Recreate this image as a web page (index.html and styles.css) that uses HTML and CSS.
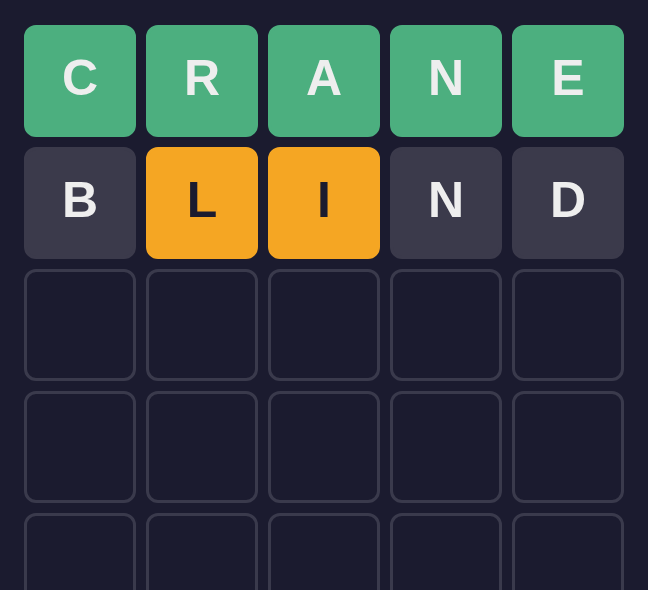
FILE: index.html
```html
<!DOCTYPE html>
<html lang="en">

<head>
    <title>Wordle</title>
    <meta name="viewport" content="width=device-width, initial-scale=1">
    <link rel="stylesheet" href="styles.css">
</head>

<body>
    <div class="board">
        <div class="tile correct">C</div>
        <div class="tile correct">R</div>
        <div class="tile correct">A</div>
        <div class="tile correct">N</div>
        <div class="tile correct">E</div>

        <div class="tile absent">B</div>
        <div class="tile present">L</div>
        <div class="tile present">I</div>
        <div class="tile absent">N</div>
        <div class="tile absent">D</div>

        <div class="tile"></div>
        <div class="tile"></div>
        <div class="tile"></div>
        <div class="tile"></div>
        <div class="tile"></div>

        <div class="tile"></div>
        <div class="tile"></div>
        <div class="tile"></div>
        <div class="tile"></div>
        <div class="tile"></div>

        <div class="tile"></div>
        <div class="tile"></div>
        <div class="tile"></div>
        <div class="tile"></div>
        <div class="tile"></div>
    </div>
</body>

</html>
```

FILE: styles.css
```css
* {
    box-sizing: border-box;
    font-family: "Liberation Sans", Arial, sans-serif;
}

html,
body {
    margin: 0;
    background-color: #1b1b2f;
}

body {
    padding: 25px 24px 0;
    height: 590px;
    overflow: hidden;
}

.board {
    display: grid;
    grid-template-columns: repeat(5, 112px);
    grid-auto-rows: 112px;
    gap: 10px;
}

.tile {
    display: flex;
    align-items: center;
    justify-content: center;
    padding-bottom: 6px;
    border: 3px solid #3a3a4c;
    border-radius: 12px;
    color: #eeeeee;
    font-size: 50px;
    font-weight: bold;
    line-height: 1;
}

.correct {
    background-color: #4caf7f;
    border-color: #4caf7f;
}

.present {
    background-color: #f5a623;
    border-color: #f5a623;
    color: #1b1b2f;
}

.absent {
    background-color: #3b3a4b;
    border-color: #3b3a4b;
}
```
